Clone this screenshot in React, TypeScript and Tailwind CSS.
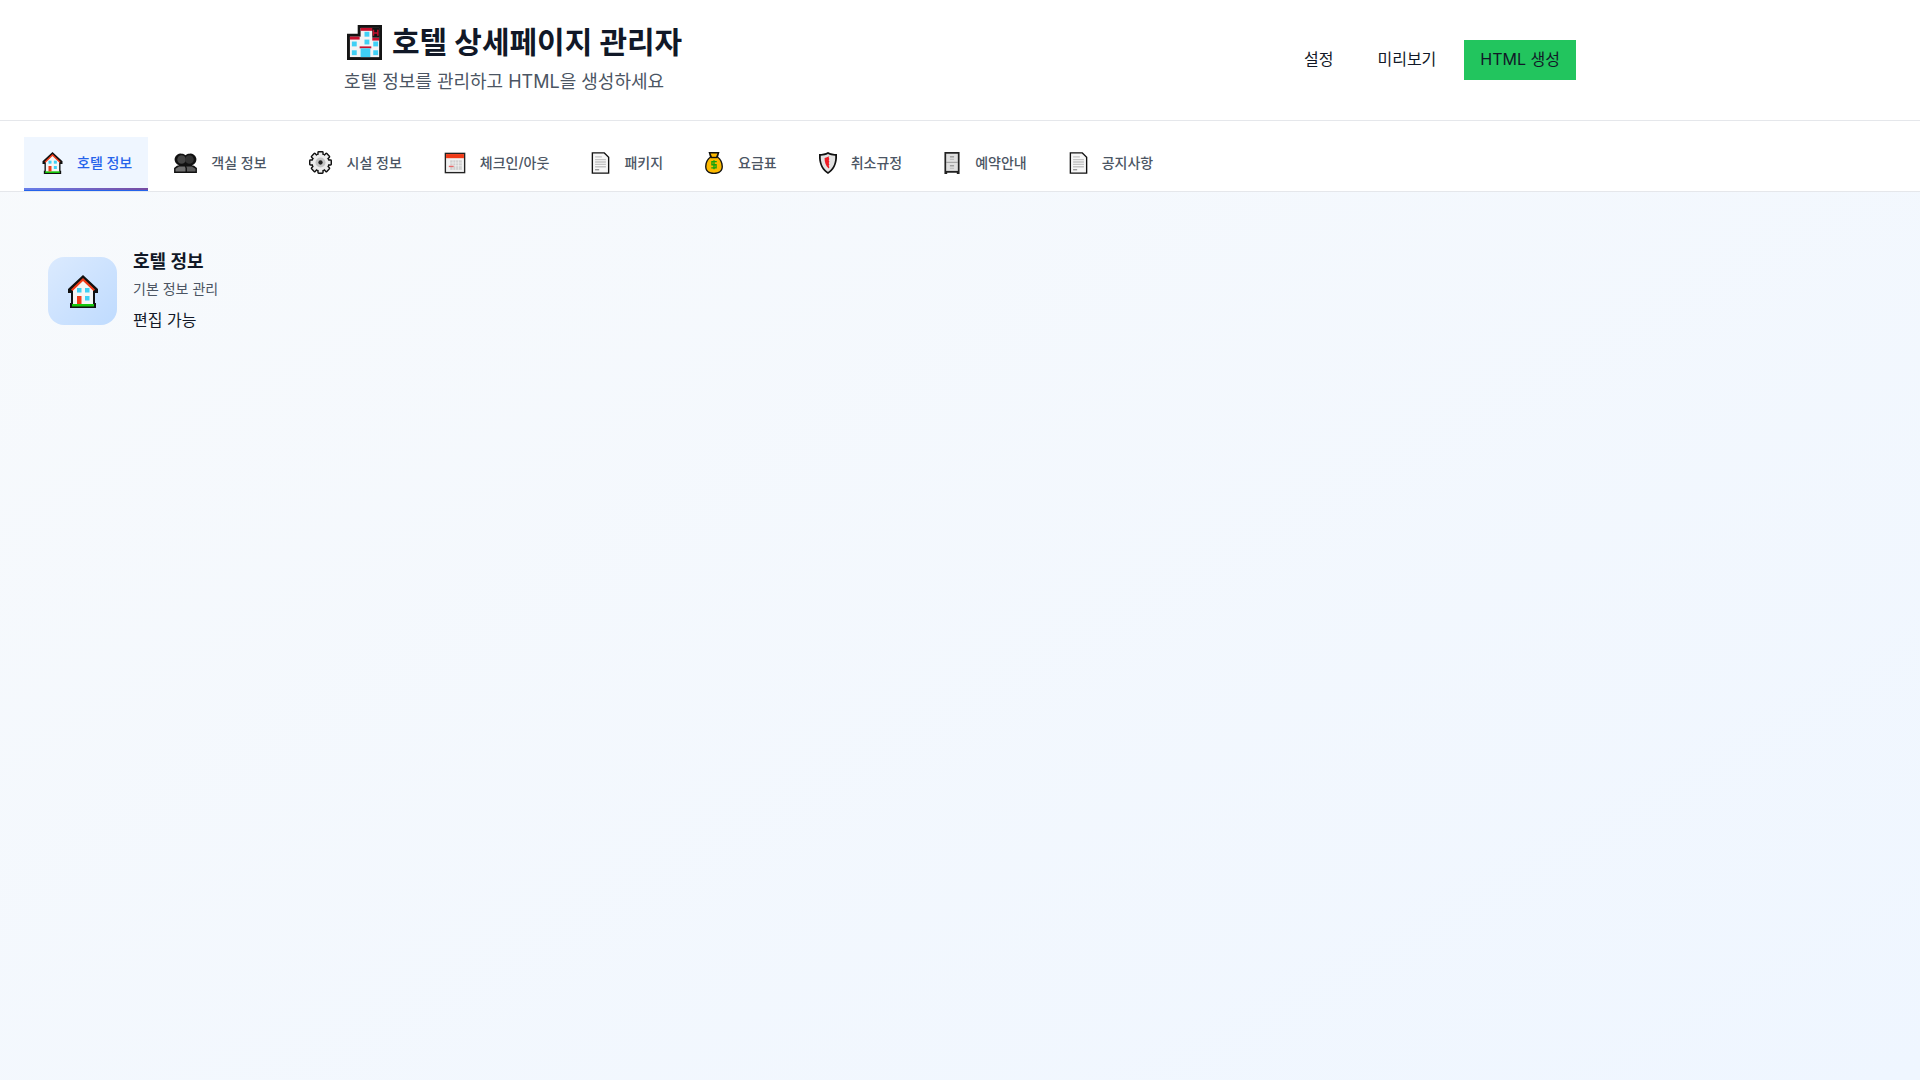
import React from 'react';

const HotelIcon: React.FC<{ className?: string }> = ({ className }) => (
  <svg viewBox="0 0 36 36" className={className}>
    <path d="M11 0h25v36H0V9h11z" fill="#141414" />
    <rect x="14" y="3" width="19" height="30" fill="#f4f4f4" />
    <rect x="3" y="12" width="30" height="21" fill="#f4f4f4" />
    <rect x="14" y="3" width="13" height="3" fill="#c8102e" />
    <rect x="3" y="12" width="10" height="3" fill="#c8102e" />
    <rect x="26" y="13" width="7" height="3" fill="#c8102e" />
    <rect x="26" y="3" width="7" height="10" fill="#141414" />
    <path d="M26.500 5h1.500v2.500h3V5h1.500v6H31V9h-3v2h-1.500z" fill="#c8102e" />
    <rect x="18" y="7" width="5" height="5" fill="#3fd0f5" />
    <rect x="18" y="15" width="5" height="5" fill="#3fd0f5" />
    <rect x="5" y="17" width="5" height="5" fill="#3fd0f5" />
    <rect x="5" y="26" width="5" height="5" fill="#3fd0f5" />
    <rect x="27" y="17" width="5" height="5" fill="#3fd0f5" />
    <rect x="27" y="26" width="5" height="5" fill="#3fd0f5" />
    <rect x="13" y="22" width="12" height="2" fill="#c8102e" />
    <rect x="14" y="24" width="10" height="9" fill="#3fd0f5" />
  </svg>
);

const HouseIcon: React.FC<{ className?: string }> = ({ className }) => (
  <svg viewBox="0 0 30 33" className={className}>
    <path d="M15 0 30 14v4h-3v10h1v5H2v-5h1V18H0v-4z" fill="#111" />
    <path d="M15 4 25 14v16H5V14z" fill="#f5f5f5" />
    <path d="M15 3 27 14.500 25.500 16 15 6 4.500 16 3 14.500z" fill="#f03a17" />
    <rect x="4" y="29" width="22" height="2.500" fill="#16c60c" />
    <rect x="9" y="13" width="4.500" height="4.500" fill="#3fd0f5" />
    <rect x="17" y="13" width="4.500" height="4.500" fill="#3fd0f5" />
    <rect x="17" y="21" width="4.500" height="4.500" fill="#3fd0f5" />
    <rect x="9" y="21" width="4.500" height="8" fill="#f03a17" />
  </svg>
);

const PeopleIcon: React.FC<{ className?: string }> = ({ className }) => (
  <svg viewBox="0 0 32 28" className={className}>
    <path d="M0 28v-7l4-3 3-1a7.500 7.500 0 0 1 4-16c2 0 4 1 5 2 1-1 3-2 5-2a7.500 7.500 0 0 1 4 16l3 1 4 3v7z" fill="#111" />
    <circle cx="10.500" cy="9" r="6" fill="#444" />
    <circle cx="21.500" cy="9" r="6" fill="#333" />
    <path d="M2 26v-4l5-3h8l1 2v5z" fill="#707070" />
    <path d="M18 26v-5l-1-2h8l5 3v4z" fill="#5c5c5c" />
  </svg>
);

const GearIcon: React.FC<{ className?: string }> = ({ className }) => (
  <svg viewBox="0 0 32 32" className={className}>
    <circle cx="16" cy="16" r="12" fill="#ececec" stroke="#111" strokeWidth="2" />
    {[0, 45, 90, 135, 180, 225, 270, 315].map((a) => (
      <rect key={a} x="12.500" y="1" width="7" height="6" rx="1" fill="#ececec" stroke="#111" strokeWidth="2" transform={`rotate(${a} 16 16)`} />
    ))}
    <circle cx="16" cy="16" r="11" fill="#ececec" />
    <circle cx="16" cy="16" r="7" fill="#c4c4c4" />
    <circle cx="16" cy="16" r="3" fill="#222" />
  </svg>
);

const CalendarIcon: React.FC<{ className?: string }> = ({ className }) => (
  <svg viewBox="0 0 32 32" className={className}>
    <rect x="1" y="1" width="30" height="30" fill="#222" />
    <rect x="3" y="3" width="26" height="26" fill="#f2f2f2" />
    <rect x="3" y="3" width="26" height="6" fill="#f03a17" />
    <path d="M9 12h17v14H9z" fill="#cfcfcf" />
    <path d="M13 12v14M17 12v14M21 12v14M9 16h17M9 20h17" stroke="#f2f2f2" strokeWidth="1" />
    <rect x="7" y="20" width="7" height="2" fill="#e86a6a" />
  </svg>
);

const DocIcon: React.FC<{ className?: string }> = ({ className }) => (
  <svg viewBox="0 0 28 32" className={className}>
    <path d="M1 0h19l7 7v25H1z" fill="#111" />
    <path d="M3 2h16l6 6v22H3z" fill="#f7f7f7" />
    <path d="M6 7h10M6 11h16M6 14.500h16M6 18h16M6 21.500h16" stroke="#c4c4c4" strokeWidth="2" />
    <path d="M6 26h6" stroke="#777" strokeWidth="1.500" />
  </svg>
);

const MoneyBagIcon: React.FC<{ className?: string }> = ({ className }) => (
  <svg viewBox="0 0 26 32" className={className}>
    <path d="M5 0h16l-2 7c4 3 7 8 7 14 0 7-5 11-13 11S0 28 0 21c0-6 3-11 7-14z" fill="#111" />
    <path d="M8 2h10l-2 5c5 3 8 8 8 14 0 6-4 9-11 9S2 27 2 21c0-6 3-11 8-14z" fill="#fdb900" />
    <rect x="8" y="7" width="10" height="2" fill="#111" />
    <path d="M17 14h-7v4.500h6V23H9M13 12v13" fill="none" stroke="#16a30c" strokeWidth="2" />
  </svg>
);

const ShieldIcon: React.FC<{ className?: string }> = ({ className }) => (
  <svg viewBox="0 0 26 32" className={className}>
    <path d="M13 0c4 2 8 3 13 3 1 12-3 23-13 29C3 26-1 15 0 3c5 0 9-1 13-3z" fill="#111" />
    <path d="M13 3c3 1.500 6 2.500 10.500 2.500C24 15 21 24 13 29 5 24 2 15 2.500 5.500 7 5.500 10 4.500 13 3z" fill="#e2e2e2" />
    <path d="M13 7c-1.500.8-3.500 1.500-5 1.600 0 6 1.500 11 6 15.400l1-2-1-2 1-2-1-2 1-2-1-2 1-2-1-2 1-2z" fill="#ee1c25" />
  </svg>
);

const CabinetIcon: React.FC<{ className?: string }> = ({ className }) => (
  <svg viewBox="0 0 22 32" className={className}>
    <path d="M0 0h22v32h-4v-2H4v2H0z" fill="#222" />
    <rect x="2.500" y="2.500" width="17" height="25" fill="#e0e0e0" />
    <path d="M2.500 15h17" stroke="#777" strokeWidth="1" />
    <rect x="8" y="6" width="6" height="2" fill="#999" />
    <rect x="8" y="10" width="6" height="1" fill="#aaa" />
    <rect x="8" y="19" width="6" height="2" fill="#999" />
    <rect x="8" y="23" width="6" height="1" fill="#aaa" />
  </svg>
);

// box = emoji advance in the tab, icon = what is actually drawn
const tabs = [
  { label: '호텔 정보', Icon: HouseIcon, box: 'w-[29px]', icon: 'w-[21px] h-[22px]', active: true },
  { label: '객실 정보', Icon: PeopleIcon, box: 'w-[31px]', icon: 'w-[23px] h-[20px]' },
  { label: '시설 정보', Icon: GearIcon, box: 'w-[32px]', icon: 'w-[23px] h-[23px]' },
  { label: '체크인/아웃', Icon: CalendarIcon, box: 'w-[30px]', icon: 'w-[22px] h-[22px]' },
  { label: '패키지', Icon: DocIcon, box: 'w-[27px]', icon: 'w-[19px] h-[22px]' },
  { label: '요금표', Icon: MoneyBagIcon, box: 'w-[27px]', icon: 'w-[18px] h-[22px]' },
  { label: '취소규정', Icon: ShieldIcon, box: 'w-[26px]', icon: 'w-[18px] h-[22px]' },
  { label: '예약안내', Icon: CabinetIcon, box: 'w-[25px]', icon: 'w-[16px] h-[22px]' },
  { label: '공지사항', Icon: DocIcon, box: 'w-[27px]', icon: 'w-[19px] h-[22px]' },
];

const App: React.FC = () => {
  return (
    <div className="min-h-screen flex flex-col bg-gradient-to-br from-[#f8fafc] to-[#eff6ff] font-['Inter','Noto_Sans_CJK_KR',sans-serif]">
      {/* Header */}
      <header className="bg-white border-b border-[#e5e7eb] h-[121px]">
        <div className="max-w-7xl mx-auto px-6 h-full flex items-center justify-between">
          <div className="pb-[2px]">
            <h1 className="flex items-center gap-[10px] text-3xl font-bold text-[#111827]">
              <HotelIcon className="w-[35px] h-[35px] ml-[3px]" />
              호텔 상세페이지 관리자
            </h1>
            <p className="mt-[10px] text-lg leading-6 text-[#4b5563]">호텔 정보를 관리하고 HTML을 생성하세요</p>
          </div>
          <div className="flex items-center gap-3">
            <button className="px-4 h-10 pb-[2px] text-base text-[#111827]">설정</button>
            <button className="px-4 h-10 pb-[2px] text-base text-[#111827]">미리보기</button>
            <button className="px-4 h-10 pb-[2px] bg-[#22c55e] text-base text-[#111827]">HTML 생성</button>
          </div>
        </div>
      </header>

      {/* Tabs */}
      <nav className="bg-white border-b border-[#e5e7eb] h-[71px] px-6 flex items-end gap-2">
        {tabs.map(({ label, Icon, box, icon, active }) => (
          <button
            key={label}
            className={
              active
                ? 'relative h-[54px] px-4 pb-[3px] flex items-center gap-2 bg-[#eff6ff] text-sm font-medium text-[#2563eb]'
                : 'h-[54px] px-4 pb-[3px] flex items-center gap-2 text-sm font-medium text-[#4b5563]'
            }
          >
            <span className={`${box} flex pl-[2px]`}>
              <Icon className={icon} />
            </span>
            {label}
            {active && (
              <span className="absolute inset-x-0 bottom-0 h-[3px] border-b border-[#2563eb] bg-gradient-to-r from-[#667eea] to-[#764ba2]" />
            )}
          </button>
        ))}
      </nav>

      {/* Content */}
      <main className="flex-1 px-12 pt-14">
        <div className="flex items-center gap-4">
          <div className="w-[69px] h-[68px] mt-[2px] rounded-2xl bg-gradient-to-br from-[#dbeafe] to-[#bfdbfe] flex items-center justify-center">
            <HouseIcon className="w-[30px] h-[33px]" />
          </div>
          <div>
            <h2 className="text-lg leading-7 font-bold text-[#111827]">호텔 정보</h2>
            <p className="mt-[3px] text-sm text-[#4b5563]">기본 정보 관리</p>
            <p className="mt-[9px] text-base leading-6 text-[#111827]">편집 가능</p>
          </div>
        </div>
      </main>
    </div>
  );
};

export default App;
